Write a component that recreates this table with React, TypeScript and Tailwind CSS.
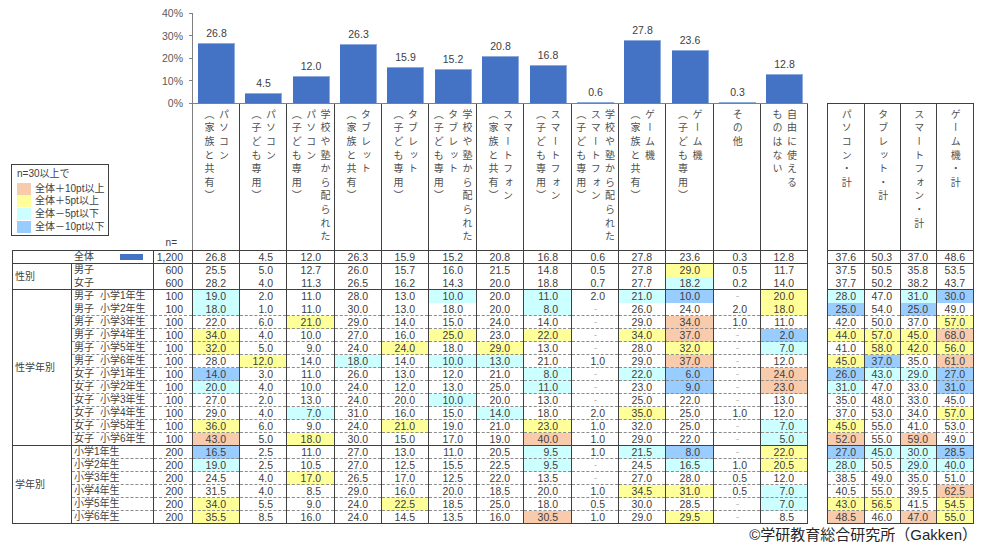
import React from "react";

const HL: Record<string, string> = {
  o: "bg-[#f8cbad]",
  y: "bg-[#ffff99]",
  c: "bg-[#ccffff]",
  b: "bg-[#99ccff]",
};

const MAIN_W = [
  "w-[47px]", "w-[47px]", "w-[48px]", "w-[47px]", "w-[47px]", "w-[48px]", "w-[47px]",
  "w-[48px]", "w-[47px]", "w-[47px]", "w-[48px]", "w-[47px]", "w-[47px]",
];
const SUB_W = ["w-[37px]", "w-[36px]", "w-[36px]", "w-[37px]"];

const HEAD = [
  ["パソコン", "（家族と共有）"],
  ["パソコン", "（子ども専用）"],
  ["学校や塾から配られた", "パソコン", "（子ども専用）"],
  ["タブレット", "（家族と共有）"],
  ["タブレット", "（子ども専用）"],
  ["学校や塾から配られた", "タブレット", "（子ども専用）"],
  ["スマートフォン", "（家族と共有）"],
  ["スマートフォン", "（子ども専用）"],
  ["学校や塾から配られた", "スマートフォン", "（子ども専用）"],
  ["ゲーム機", "（家族と共有）"],
  ["ゲーム機", "（子ども専用）"],
  ["その他"],
  ["自由に使える", "ものはない"],
];
const HEAD2 = ["パソコン・計", "タブレット・計", "スマートフォン・計", "ゲーム機・計"];

const TOTAL = "26.8 4.5 12.0 26.3 15.9 15.2 20.8 16.8 0.6 27.8 23.6 0.3 12.8 37.6 50.3 37.0 48.6";

const GENDER = [
  ["男子", "600", "25.5 5.0 12.7 26.0 15.7 16.0 21.5 14.8 0.5 27.8 29.0y 0.5 11.7 37.5 50.5 35.8 53.5"],
  ["女子", "600", "28.2 4.0 11.3 26.5 16.2 14.3 20.0 18.8 0.7 27.7 18.2c 0.2 14.0 37.7 50.2 38.2 43.7"],
];

const SEXGRADE = [
  ["男子", "小学1年生", "19.0c 2.0 11.0 28.0 13.0 10.0c 20.0 11.0c 2.0 21.0c 10.0b - 20.0y 28.0c 47.0 31.0c 30.0b"],
  ["男子", "小学2年生", "18.0c 1.0 11.0 30.0 13.0 18.0 20.0 8.0c - 26.0 24.0 2.0 18.0y 25.0b 54.0 25.0b 49.0"],
  ["男子", "小学3年生", "22.0 6.0 21.0y 29.0 14.0 15.0 24.0 14.0 - 29.0 34.0o 1.0 11.0 42.0 50.0 37.0 57.0y"],
  ["男子", "小学4年生", "34.0y 4.0 10.0 27.0 16.0 25.0y 23.0 22.0y - 34.0y 37.0o - 2.0b 44.0y 57.0y 45.0y 68.0o"],
  ["男子", "小学5年生", "32.0y 5.0 9.0 24.0 24.0y 18.0 29.0y 13.0 - 28.0 32.0y - 7.0c 41.0 58.0y 42.0y 56.0y"],
  ["男子", "小学6年生", "28.0 12.0y 14.0 18.0c 14.0 10.0c 13.0c 21.0 1.0 29.0 37.0o - 12.0 45.0y 37.0b 35.0 61.0o"],
  ["女子", "小学1年生", "14.0b 3.0 11.0 26.0 13.0 12.0 21.0 8.0c - 22.0c 6.0b - 24.0o 26.0b 43.0c 29.0c 27.0b"],
  ["女子", "小学2年生", "20.0c 4.0 10.0 24.0 12.0 13.0 25.0 11.0c - 23.0 9.0b - 23.0o 31.0c 47.0 33.0 31.0b"],
  ["女子", "小学3年生", "27.0 2.0 13.0 24.0 20.0 10.0c 20.0 13.0 - 25.0 22.0 - 13.0 35.0 48.0 33.0 45.0"],
  ["女子", "小学4年生", "29.0 4.0 7.0c 31.0 16.0 15.0 14.0c 18.0 2.0 35.0y 25.0 1.0 12.0 37.0 53.0 34.0 57.0y"],
  ["女子", "小学5年生", "36.0y 6.0 9.0 24.0 21.0y 19.0 21.0 23.0y 1.0 32.0 25.0 - 7.0c 45.0y 55.0 41.0 53.0"],
  ["女子", "小学6年生", "43.0o 5.0 18.0y 30.0 15.0 17.0 19.0 40.0o 1.0 29.0 22.0 - 5.0c 52.0o 55.0 59.0o 49.0"],
];

const GRADE = [
  ["小学1年生", "16.5b 2.5 11.0 27.0 13.0 11.0 20.5 9.5c 1.0 21.5c 8.0b - 22.0y 27.0b 45.0c 30.0c 28.5b"],
  ["小学2年生", "19.0c 2.5 10.5 27.0 12.5 15.5 22.5 9.5c - 24.5 16.5c 1.0 20.5y 28.0c 50.5 29.0c 40.0c"],
  ["小学3年生", "24.5 4.0 17.0y 26.5 17.0 12.5 22.0 13.5 - 27.0 28.0 0.5 12.0 38.5 49.0 35.0 51.0"],
  ["小学4年生", "31.5 4.0 8.5 29.0 16.0 20.0 18.5 20.0 1.0 34.5y 31.0y 0.5 7.0c 40.5 55.0 39.5 62.5o"],
  ["小学5年生", "34.0y 5.5 9.0 24.0 22.5y 18.5 25.0 18.0 0.5 30.0 28.5 - 7.0c 43.0y 56.5y 41.5 54.5y"],
  ["小学6年生", "35.5y 8.5 16.0 24.0 14.5 13.5 16.0 30.5o 1.0 29.0 29.5y - 8.5 48.5o 46.0 47.0o 55.0y"],
];

type Edge = "solid" | "dashed" | "none";

const bottomCls = (e: Edge) =>
  e === "solid"
    ? "border-b border-b-[#404040]"
    : e === "dashed"
      ? "border-b border-b-[#8c8c8c] [border-bottom-style:dashed]"
      : "";

const CELL = "p-0 h-[13px] leading-[12px] whitespace-nowrap border-l border-r border-l-[#404040] border-r-[#404040]";

function Values({ v, bottom, top }: { v: string; bottom: Edge; top?: boolean }) {
  const tokens = v.split(" ");
  const b = bottomCls(bottom);
  const t = top ? "border-t border-t-[#404040]" : "";
  const cells: React.ReactNode[] = [];
  tokens.forEach((tok, i) => {
    const key = tok.slice(-1);
    const hl = HL[key] ?? "";
    const text = hl ? tok.slice(0, -1) : tok;
    const sub = i >= 13;
    if (i === 13) cells.push(<td key="gap" className="p-0" />);
    cells.push(
      <td
        key={i}
        className={`${CELL} ${b} ${t} ${hl} text-right ${
          text === "-" ? "pr-[21px] text-[#a6a6a6] text-[9px]" : sub ? "pr-[8px]" : "pr-[13px]"
        }`}
      >
        {text}
      </td>
    );
  });
  return <>{cells}</>;
}

const FONT = "font-['Liberation_Sans','Noto_Sans_CJK_JP',sans-serif]";

export default function App() {
  const totals = TOTAL.split(" ").slice(0, 13).map(Number);

  return (
    <div className={`w-[1001px] h-[552px] bg-white text-[#404040] ${FONT}`}>
      <div className="flex">
        {/* left: y axis + legend */}
        <div className="w-[192px] shrink-0 h-[250px] flex flex-col">
          <div className="pt-[2px] text-[10.5px]">
            {["40%", "30%", "20%", "10%", "0%"].map((l) => (
              <div key={l} className="h-[22.5px] flex items-center justify-end gap-[6px] text-[#595959]">
                <span className="leading-[12px]">{l}</span>
                <span className="w-[3px] h-px bg-[#808080]" />
              </div>
            ))}
          </div>
          <div className="ml-[11px] mt-[49px] w-[98px] h-[72px] border border-[#404040] pl-[5px] pt-[3px] text-[10px]">
            <div className="leading-[12px]">n=30以上で</div>
            <div className="mt-[3px]">
              {[
                ["bg-[#f8cbad]", "全体＋10pt以上"],
                ["bg-[#ffff99]", "全体＋5pt以上"],
                ["bg-[#ccffff]", "全体－5pt以下"],
                ["bg-[#99ccff]", "全体－10pt以下"],
              ].map(([c, t]) => (
                <div key={t} className="h-[12.6px] flex items-center gap-[4px]">
                  <span className={`w-[14px] h-[12px] ${c}`} />
                  <span className="leading-[12px]">{t}</span>
                </div>
              ))}
            </div>
          </div>
          <div className="mt-auto mb-[1px] pr-[15px] text-right text-[10px] leading-[12px]">n=</div>
        </div>

        {/* main chart + header */}
        <div className="mt-[13px] border-l border-l-[#808080] flex flex-col">
          <div className="h-[91px] border-b border-b-[#808080] flex">
            {totals.map((v, i) => (
              <div key={i} className={`${MAIN_W[i]} h-full flex flex-col items-center justify-end`}>
                <span className="text-[10.5px] leading-[11px] mb-[4px]">{v.toFixed(1)}</span>
                <div
                  className="w-[37px] bg-[#4472c4] border-t border-r border-[#8faadc]"
                  style={{ height: Math.max(1, v * 2.25) }}
                />
              </div>
            ))}
          </div>
          <div className="h-[146px] flex">
            {HEAD.map((lines, i) => (
              <div key={i} className={`${MAIN_W[i]} h-full border-r border-r-[#404040] flex justify-center pt-[5px]`}>
                <div className="[writing-mode:vertical-rl] text-[10px] leading-[14.4px] tracking-[3.6px] text-[#505050] font-['Noto_Sans_CJK_JP',sans-serif]">
                  {lines.map((l, j) => (
                    <React.Fragment key={j}>
                      {j > 0 && <br />}
                      {l}
                    </React.Fragment>
                  ))}
                </div>
              </div>
            ))}
          </div>
        </div>

        <div className="w-[19px] shrink-0" />

        {/* sub totals header */}
        <div className="flex flex-col">
          <div className="h-[103px]" />
          <div className="h-[147px] border-t border-l border-[#404040] flex">
            {HEAD2.map((l, i) => (
              <div key={l} className={`${SUB_W[i]} h-full border-r border-r-[#404040] flex justify-center pt-[5px]`}>
                <div className="[writing-mode:vertical-rl] text-[10px] leading-[14.4px] tracking-[3.6px] text-[#505050] font-['Noto_Sans_CJK_JP',sans-serif]">
                  {l}
                </div>
              </div>
            ))}
          </div>
        </div>
      </div>

      {/* table */}
      <table className="ml-[12px] w-[960px] table-fixed border-collapse text-[10.5px]">
        <colgroup>
          <col className="w-[59px]" />
          <col className="w-[82px]" />
          <col className="w-[39px]" />
          {MAIN_W.map((w, i) => (
            <col key={i} className={w} />
          ))}
          <col className="w-[20px]" />
          {SUB_W.map((w, i) => (
            <col key={`s${i}`} className={w} />
          ))}
        </colgroup>
        <tbody>
          <tr className="h-[13px]">
            <td colSpan={2} className={`${CELL} border-t border-t-[#404040] border-b border-b-[#404040]`}>
              <div className="flex items-center pl-[61px] pr-[10px]">
                <span className="text-[10px]">全体</span>
                <span className="ml-auto w-[23px] h-[6px] bg-[#4472c4]" />
              </div>
            </td>
            <td className={`${CELL} border-t border-t-[#404040] border-b border-b-[#404040] text-right pr-[9px]`}>1,200</td>
            <Values v={TOTAL} bottom="solid" top />
          </tr>

          {GENDER.map(([lab, n, v], i) => (
            <tr key={lab} className="h-[13px]">
              {i === 0 && (
                <td rowSpan={2} className={`${CELL} border-b border-b-[#404040] pl-[2px] text-[10px] align-middle`}>
                  性別
                </td>
              )}
              <td className={`${CELL} ${bottomCls(i === 1 ? "solid" : "none")} pl-[2px] text-[10px]`}>{lab}</td>
              <td className={`${CELL} ${bottomCls(i === 1 ? "solid" : "none")} text-right pr-[9px]`}>{n}</td>
              <Values v={v} bottom={i === 1 ? "solid" : "none"} />
            </tr>
          ))}

          {SEXGRADE.map(([sx, gr, v], i) => {
            const e: Edge = i === 11 ? "solid" : i === 0 ? "none" : "dashed";
            return (
              <tr key={sx + gr} className="h-[13px]">
                {i === 0 && (
                  <td rowSpan={12} className={`${CELL} border-b border-b-[#404040] pl-[2px] text-[10px] align-middle`}>
                    性学年別
                  </td>
                )}
                <td className={`${CELL} ${bottomCls(e)} pl-[2px] text-[10px]`}>
                  {sx}
                  <span className="ml-[6px]">{gr}</span>
                </td>
                <td className={`${CELL} ${bottomCls(e)} text-right pr-[9px]`}>100</td>
                <Values v={v} bottom={e} />
              </tr>
            );
          })}

          {GRADE.map(([gr, v], i) => {
            const e: Edge = i === 5 ? "solid" : "dashed";
            return (
              <tr key={gr} className="h-[13px]">
                {i === 0 && (
                  <td rowSpan={6} className={`${CELL} border-b border-b-[#404040] pl-[2px] text-[10px] align-middle`}>
                    学年別
                  </td>
                )}
                <td className={`${CELL} ${bottomCls(e)} pl-[2px] text-[10px]`}>{gr}</td>
                <td className={`${CELL} ${bottomCls(e)} text-right pr-[9px]`}>200</td>
                <Values v={v} bottom={e} />
              </tr>
            );
          })}
        </tbody>
      </table>

      <div className="flex justify-end pr-[24px] mt-[3px]">
        <span className="text-[15px] leading-[16px] text-[#262626]">©学研教育総合研究所（Gakken）</span>
      </div>
    </div>
  );
}
